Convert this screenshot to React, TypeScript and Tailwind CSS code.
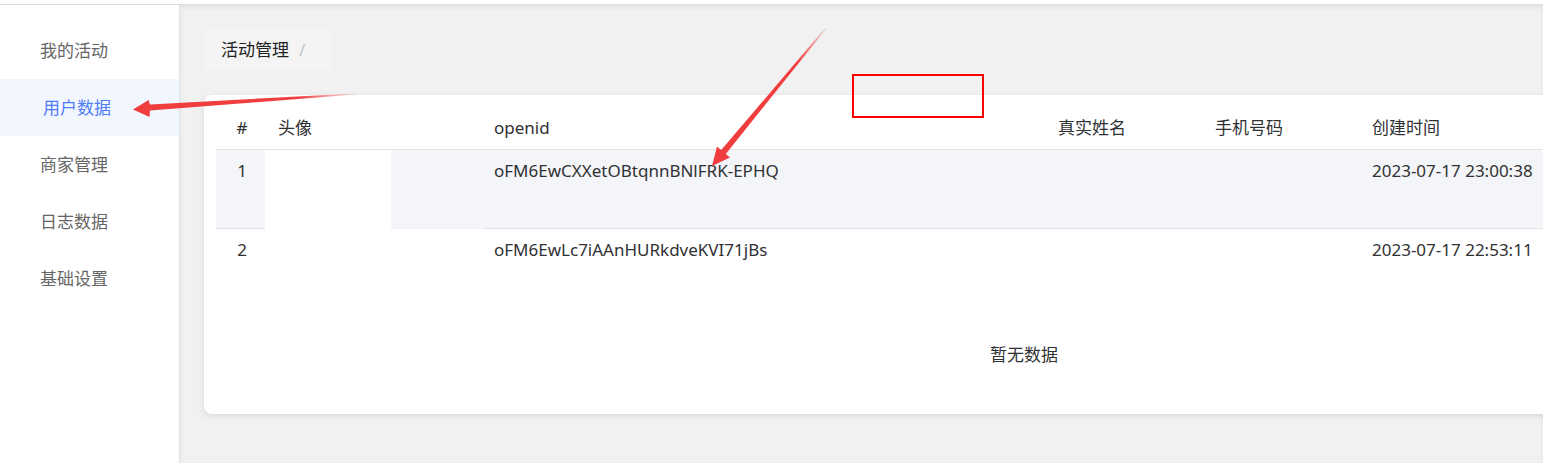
import React from 'react';

const menu = ['我的活动', '用户数据', '商家管理', '日志数据', '基础设置'];

const rows = [
  { id: 1, openid: 'oFM6EwCXXetOBtqnnBNlFRK-EPHQ', time: '2023-07-17 23:00:38' },
  { id: 2, openid: 'oFM6EwLc7iAAnHURkdveKVI71jBs', time: '2023-07-17 22:53:11' },
];

const Annotations = () => (
  <svg
    className="absolute left-0 top-0 pointer-events-none"
    width="1543"
    height="463"
    viewBox="0 0 1543 463"
  >
    <defs>
      <linearGradient id="a1" x1="355" y1="94" x2="133" y2="109" gradientUnits="userSpaceOnUse">
        <stop offset="0" stopColor="#f03e3e" stopOpacity="0.1" />
        <stop offset="0.25" stopColor="#f03e3e" stopOpacity="1" />
        <stop offset="1" stopColor="#f03e3e" />
      </linearGradient>
      <linearGradient id="a2" x1="826" y1="28" x2="712" y2="166" gradientUnits="userSpaceOnUse">
        <stop offset="0" stopColor="#f03e3e" stopOpacity="0.1" />
        <stop offset="0.25" stopColor="#f03e3e" stopOpacity="1" />
        <stop offset="1" stopColor="#f03e3e" />
      </linearGradient>
    </defs>
    <polygon
      fill="url(#a1)"
      points="355,93.4 150,104.5 148.5,100 133,109.5 149.5,117 150,110.5 355,94.6"
    />
    <polygon
      fill="url(#a2)"
      points="826.5,28.4 725.8,153.9 730,157.5 712,166 717,146.5 721.2,150.1 825.5,27.6"
    />
    <rect x="853" y="75" width="130" height="42" fill="none" stroke="#ff0000" strokeWidth="2" />
  </svg>
);

export default function App() {
  return (
    <div
      className="relative h-[463px] w-full overflow-hidden bg-white text-[17px]"
      style={{ fontFamily: '"Noto Sans", "Noto Sans CJK SC", sans-serif' }}
    >
      <div className="h-[4px] bg-white" />
      <div className="h-[1px] bg-[#dcdcdc]" />
      <div className="flex h-[458px]">
        {/* sidebar */}
        <aside className="w-[180px] shrink-0 border-r border-[#e2e2e2] bg-white pt-[17px]">
          {menu.map((label, i) => (
            <div
              key={label}
              className={
                i === 1
                  ? 'flex h-[57px] items-center bg-[#f2f6ff] pl-[43px] text-[#4f7cf6]'
                  : 'flex h-[57px] items-center pl-[40px] text-[#666666]'
              }
            >
              {label}
            </div>
          ))}
        </aside>

        {/* main */}
        <main className="min-w-0 flex-1 overflow-hidden bg-[#f1f1f1] pl-[23px] pt-[24px] shadow-[inset_0_3px_5px_rgba(0,0,0,0.06)]">
          <div className="flex h-[41px] w-[130px] items-center rounded-md bg-[#f4f4f4] pl-[18px]">
            <span className="text-[#222]">活动管理</span>
            <span className="ml-[10px] text-[#c0c4cc]">/</span>
          </div>

          <div className="ml-[1px] mt-[25px] w-[1640px] rounded-lg bg-white p-3 shadow-[0_2px_6px_rgba(0,0,0,0.1)]">
            <table className="w-[1616px] table-fixed border-collapse text-[#303133]">
              <colgroup>
                <col className="w-[49px]" />
                <col className="w-[217px]" />
                <col className="w-[564px]" />
                <col className="w-[157px]" />
                <col className="w-[157px]" />
                <col className="w-[200px]" />
                <col />
              </colgroup>
              <thead>
                <tr className="h-[42px] border-b border-[#e3e3e6]">
                  <th className="pl-[3px] text-center font-normal">#</th>
                  <th className="pl-[13px] text-left font-normal">头像</th>
                  <th className="pl-[12px] text-left font-normal">openid</th>
                  <th className="pl-[12px] text-left font-normal">真实姓名</th>
                  <th className="pl-[12px] text-left font-normal">手机号码</th>
                  <th className="pl-[12px] text-left font-normal">创建时间</th>
                  <th />
                </tr>
              </thead>
              <tbody>
                {rows.map((r, i) => (
                  <tr
                    key={r.id}
                    className={i === 0 ? 'h-[78px] bg-[#f4f5f8]' : 'h-[78px] bg-white'}
                  >
                    <td
                      className={
                        i === 0
                          ? 'border-b border-[#e3e3e6] pl-[3px] pt-[8px] text-center align-top'
                          : 'pl-[3px] pt-[8px] text-center align-top'
                      }
                    >
                      {r.id}
                    </td>
                    <td className="p-0 align-top">
                      <div className="h-[79px] w-[126px] bg-white" />
                    </td>
                    {[r.openid, '', '', r.time, ''].map((v, j) => (
                      <td
                        key={j}
                        className={
                          i === 0
                            ? 'border-b border-[#e3e3e6] pl-[12px] pt-[8px] align-top whitespace-nowrap'
                            : 'pl-[12px] pt-[8px] align-top whitespace-nowrap'
                        }
                      >
                        {v}
                      </td>
                    ))}
                  </tr>
                ))}
              </tbody>
            </table>
            <div className="flex h-[94px] w-[1616px] items-center justify-center text-[#303133]">
              暂无数据
            </div>
          </div>
        </main>
      </div>
      <Annotations />
    </div>
  );
}
